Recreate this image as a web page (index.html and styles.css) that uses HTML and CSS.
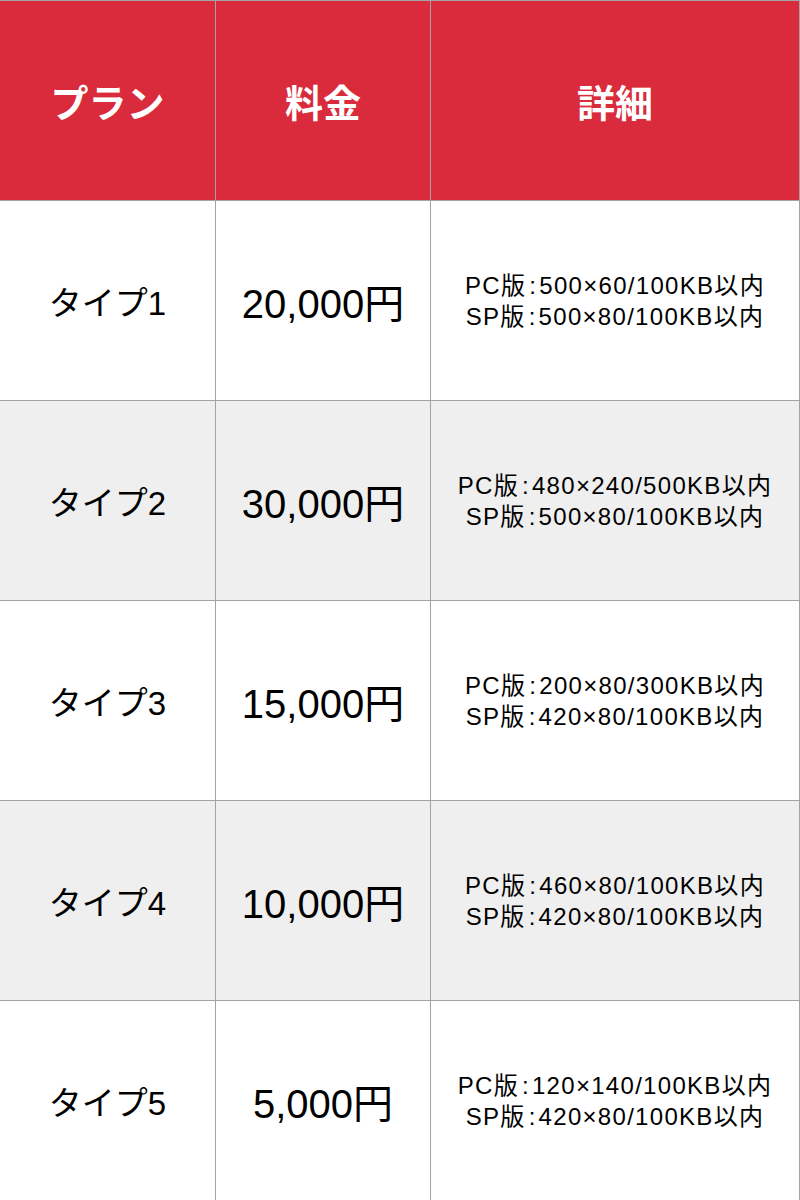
FILE: index.html
```html
<!DOCTYPE html>
<html lang="ja">
<head>
<meta charset="utf-8">
<link rel="stylesheet" href="styles.css">
</head>
<body>
<div class="table">
  <div class="cell head first">プラン</div>
  <div class="cell head">料金</div>
  <div class="cell head">詳細</div>

  <div class="cell plan first">タイプ1</div>
  <div class="cell price">20,000円</div>
  <div class="cell detail"><p class="lines">PC版<span class="colon">:</span>500×60/100KB以内<br>SP版<span class="colon">:</span>500×80/100KB以内</p></div>

  <div class="cell plan first alt">タイプ2</div>
  <div class="cell price alt">30,000円</div>
  <div class="cell detail alt"><p class="lines">PC版<span class="colon">:</span>480×240/500KB以内<br>SP版<span class="colon">:</span>500×80/100KB以内</p></div>

  <div class="cell plan first">タイプ3</div>
  <div class="cell price">15,000円</div>
  <div class="cell detail"><p class="lines">PC版<span class="colon">:</span>200×80/300KB以内<br>SP版<span class="colon">:</span>420×80/100KB以内</p></div>

  <div class="cell plan first alt">タイプ4</div>
  <div class="cell price alt">10,000円</div>
  <div class="cell detail alt"><p class="lines">PC版<span class="colon">:</span>460×80/100KB以内<br>SP版<span class="colon">:</span>420×80/100KB以内</p></div>

  <div class="cell plan first">タイプ5</div>
  <div class="cell price">5,000円</div>
  <div class="cell detail"><p class="lines">PC版<span class="colon">:</span>120×140/100KB以内<br>SP版<span class="colon">:</span>420×80/100KB以内</p></div>
</div>
</body>
</html>
```

FILE: styles.css
```css
html, body {
  margin: 0;
  padding: 0;
  background: #ffffff;
}
body {
  font-family: "Liberation Sans", "Noto Sans CJK JP", sans-serif;
  color: #000;
}
.table {
  display: grid;
  grid-template-columns: 216px 215px 369px;
  grid-auto-rows: 200px;
  grid-template-rows: 201px;
  width: 800px;
}
.cell {
  display: flex;
  align-items: center;
  justify-content: center;
  text-align: center;
  border-right: 1px solid #a3a3a3;
  border-bottom: 1px solid #a3a3a3;
  background: #ffffff;
}
.head {
  background: #d92b3b;
  color: #ffffff;
  font-family: "Noto Sans CJK JP", sans-serif;
  font-weight: 700;
  font-size: 38px;
  border-top: 1px solid #a3a3a3;
}
.alt {
  background: #efefef;
}
.plan {
  font-size: 33px;
}
.price {
  font-size: 40px;
}
.detail {
  font-size: 24px;
  line-height: 31px;
  letter-spacing: 1.3px;
}
.lines {
  margin: 0;
  white-space: nowrap;
}
.colon {
  margin: 0 2px 0 3px;
}
```
